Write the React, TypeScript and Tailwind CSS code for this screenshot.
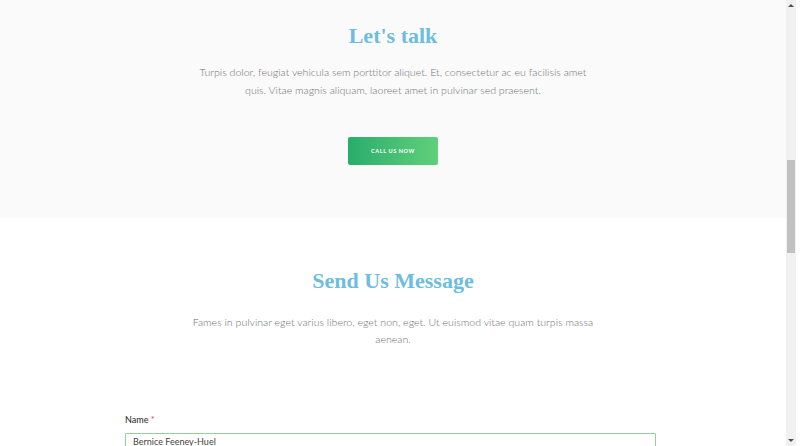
import React from 'react';

const App: React.FC = () => {
  return (
    <div className="flex h-[446px] w-[800px] overflow-hidden bg-white">
      <div className="w-[786px] shrink-0" style={{ fontFamily: 'Lato, "Open Sans", sans-serif' }}>
        {/* Let's talk */}
        <section className="h-[218px] bg-[#fafafa] pt-[22px] flex flex-col items-center">
          <h2 className="h-[28px] leading-[28px] text-[22px] font-bold text-[#6dbde1]" style={{ fontFamily: '"Liberation Serif", serif' }}>
            Let's talk
          </h2>
          <p className="mt-[13px] w-[410px] text-center text-[10.6px] leading-[18px] font-light text-[#707070]">
            Turpis dolor, feugiat vehicula sem porttitor aliquet. Et, consectetur ac eu facilisis amet quis. Vitae magnis aliquam, laoreet amet in pulvinar sed praesent.
          </p>
          <button className="mt-[38px] w-[90px] h-[28px] rounded-[2px] bg-gradient-to-r from-[#27ad6b] to-[#5fd07b] text-white text-[5.5px] font-bold tracking-[0.6px] uppercase">
            Call us now
          </button>
        </section>

        {/* Send Us Message */}
        <section className="pt-[49px] flex flex-col items-center">
          <h2 className="h-[28px] leading-[28px] text-[22px] font-bold text-[#6dbde1]" style={{ fontFamily: '"Liberation Serif", serif' }}>
            Send Us Message
          </h2>
          <p className="mt-[19px] w-[410px] text-center text-[10.6px] leading-[17px] font-light text-[#707070]">
            Fames in pulvinar eget varius libero, eget non, eget. Ut euismod vitae quam turpis massa aenean.
          </p>
          <form className="mt-[66px] self-start ml-[125px] w-[531px]">
            <label className="block text-[9px] leading-[12px] font-medium text-[#333]">
              Name <span className="text-[#e05050]">*</span>
            </label>
            <div className="mt-[7px] h-[30px] border border-[#8fd59a] rounded-[1px] px-[7px] pt-[1px] text-[9px] leading-[14px] text-[#444]">
              Bernice Feeney-Huel
            </div>
          </form>
        </section>
      </div>

      {/* scrollbar */}
      <div className="relative w-[10px] h-full bg-[#f1f1f1] shrink-0">
        <div className="absolute left-[1px] right-[1px] top-[160px] h-[93px] bg-[#c1c1c1]" />
        <div className="absolute left-[2px] top-[4px] w-0 h-0 border-l-[3px] border-r-[3px] border-b-[3px] border-l-transparent border-r-transparent border-b-[#505050]" />
        <div className="absolute left-[2px] bottom-[4px] w-0 h-0 border-l-[3px] border-r-[3px] border-t-[3px] border-l-transparent border-r-transparent border-t-[#505050]" />
      </div>
    </div>
  );
};

export default App;
